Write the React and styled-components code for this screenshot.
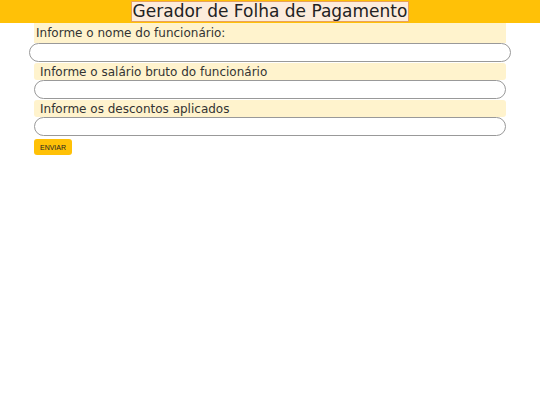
import React from 'react';
import styled, { createGlobalStyle } from 'styled-components';

const GlobalStyle = createGlobalStyle`
  body {
    margin: 0;
    background: #ffffff;
    font-family: "DejaVu Sans", Verdana, sans-serif;
  }
`;

const Header = styled.header`
  background: #ffc107;
  height: 23px;
  display: flex;
  justify-content: center;
  align-items: flex-start;
  padding-top: 1px;
  box-sizing: border-box;
`;

const Title = styled.h1`
  margin: 0;
  font-size: 17px;
  font-weight: normal;
  color: #222;
  background: #fcecdc;
  border: 1px solid #e9a25a;
  line-height: 19px;
  padding: 0 1px;
`;

const Form = styled.form`
  width: 472px;
  margin: 0 auto;
  display: flex;
  flex-direction: column;
  align-items: center;
`;

const Label = styled.label`
  align-self: stretch;
  background: #fff3cd;
  color: #333;
  font-size: 12px;
  line-height: 15px;
  height: ${(p) => (p.$first ? '20px' : '17px')};
  padding: ${(p) => (p.$first ? '3px 0 0 2px' : '2px 0 0 6px')};
  margin-top: ${(p) => (p.$first ? '0' : '1px')};
  border-radius: ${(p) => (p.$first ? '0' : '3px')};
  box-sizing: border-box;
`;

const Input = styled.input`
  width: ${(p) => (p.$wide ? '482px' : '472px')};
  height: 19px;
  box-sizing: border-box;
  border: 1px solid #999;
  border-radius: 10px;
  background: #fff;
  margin: 0;
  padding: 0 8px;
  font-family: inherit;
  outline: none;
`;

const Button = styled.button`
  align-self: flex-start;
  margin-top: 3px;
  background: #ffc107;
  border: none;
  border-radius: 3px;
  width: 38px;
  height: 16px;
  padding: 0;
  font-family: "Liberation Sans", Arial, sans-serif;
  font-size: 7px;
  color: #222;
  cursor: pointer;
`;

export default function App() {
  return (
    <>
      <GlobalStyle />
      <Header>
        <Title>Gerador de Folha de Pagamento</Title>
      </Header>
      <Form onSubmit={(e) => e.preventDefault()}>
        <Label $first>Informe o nome do funcionário:</Label>
        <Input $wide type="text" />
        <Label>Informe o salário bruto do funcionário</Label>
        <Input type="text" />
        <Label>Informe os descontos aplicados</Label>
        <Input type="text" />
        <Button type="submit">ENVIAR</Button>
      </Form>
    </>
  );
}
